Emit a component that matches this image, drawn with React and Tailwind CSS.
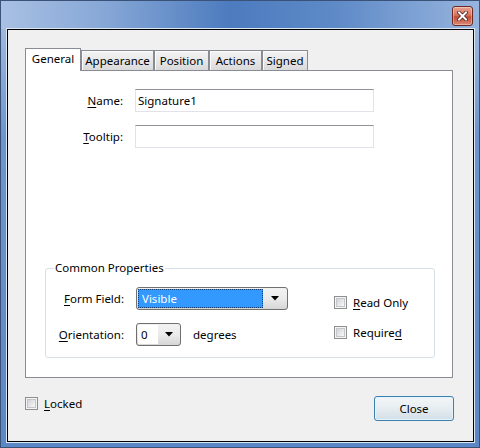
const Ul = ({ children }) => <span className="underline underline-offset-[2px]">{children}</span>;

const CheckBox = ({ children, className }) => (
  <div className={"flex items-center h-[13px] " + (className || "")}>
    <span className="w-[13px] h-[13px] border border-[#8e8f8f] bg-[#f4f4f4] p-[1px] shrink-0">
      <span className="block w-full h-full border border-[#c4c6c9] bg-gradient-to-br from-[#d2d4d7] to-[#f8f8f8]" />
    </span>
    <span className="ml-[6px] leading-none">{children}</span>
  </div>
);

const Arrow = () => (
  <svg width="8" height="5" viewBox="0 0 8 5">
    <polygon points="0,0 8,0 4,4.5" fill="#000" />
  </svg>
);

const tabs = [
  { name: "Appearance", w: "w-[73px]" },
  { name: "Position", w: "w-[55px]" },
  { name: "Actions", w: "w-[53px]" },
  { name: "Signed", w: "w-[46px]" },
];

export default function App() {
  return (
    <div className="w-[480px] h-[448px] flex flex-col border border-[#3a5278] bg-[linear-gradient(180deg,#a9c1e3_0%,#6e96cd_30%,#5b87c6_100%)] font-['Noto_Sans','Open_Sans',sans-serif] text-[11.5px] text-black">
      {/* title bar */}
      <div className="h-[28px] shrink-0 flex justify-end items-start pt-[5px] pr-[6px] bg-[linear-gradient(90deg,#a8c0e3_0%,#86a7d6_22%,#4c7bbe_48%,#5e8ac7_70%,#97b4de_100%)]">
        <div className="w-[21px] h-[20px] rounded-[3px] border border-[#6b2a22] bg-[linear-gradient(180deg,#e8a493_0%,#d8735e_45%,#c24b36_55%,#d98a74_100%)] flex items-center justify-center shadow-[inset_0_0_0_1px_rgba(255,255,255,0.35)]">
          <svg width="11" height="10" viewBox="0 0 11 10">
            <path d="M2 1.5 L9 8.5 M9 1.5 L2 8.5" stroke="#4a1d18" strokeWidth="3.6" strokeLinecap="square" />
            <path d="M2 1.5 L9 8.5 M9 1.5 L2 8.5" stroke="#fff" strokeWidth="2" strokeLinecap="square" />
          </svg>
        </div>
      </div>

      {/* client area */}
      <div className="flex-1 ml-[6px] mr-[5px] mb-[5px] border border-black bg-[#f0f0f0] shadow-[0_0_0_1px_#dce7f4] pl-[17px] pt-[18px] flex flex-col">
        {/* tabs */}
        <div className="flex items-end -mb-px relative z-10">
          <div className="w-[56px] h-[23px] bg-white border border-b-0 border-[#898c95] flex items-center justify-center pb-[3px]">
            General
          </div>
          {tabs.map((t) => (
            <div
              key={t.name}
              className={t.w + " h-[20px] mb-px border border-b-0 border-[#898c95] bg-gradient-to-b from-[#f3f3f3] via-[#e8e8e8] to-[#d9d9d9] shadow-[inset_1px_1px_0_#fbfbfb] flex items-center justify-center"}
            >
              {t.name}
            </div>
          ))}
        </div>

        {/* tab panel */}
        <div className="w-[428px] h-[308px] bg-white border border-[#898c95] flex flex-col">
          <div className="flex items-center mt-[18px]">
            <span className="w-[97px] text-right">
              <Ul>N</Ul>ame:
            </span>
            <div className="ml-[12px] w-[239px] h-[23px] border border-[#e2e3ea] border-t-[#8f9197] flex items-center pl-[2px]">
              Signature1
            </div>
          </div>
          <div className="flex items-center mt-[13px]">
            <span className="w-[97px] text-right">
              <Ul>T</Ul>ooltip:
            </span>
            <div className="ml-[12px] w-[239px] h-[23px] border border-[#e2e3ea] border-t-[#8f9197]" />
          </div>

          <div className="flex-1" />

          {/* group box */}
          <div className="relative ml-[19px] mb-[19px] w-[390px] h-[90px] border border-[#d5dfe5] rounded-[3px] flex">
            <span className="absolute -top-[9px] left-[8px] px-[1px] bg-white leading-[16px]">Common Properties</span>

            <div className="flex flex-col pt-[18px]">
              <div className="flex items-center">
                <span className="w-[78px] text-right">
                  <Ul>F</Ul>orm Field:
                </span>
                <div className="ml-[12px] w-[152px] h-[23px] rounded-[3px] border border-[#707070] bg-gradient-to-b from-[#f2f2f2] via-[#ebebeb] to-[#d6d6d6] flex items-stretch p-[1px]">
                  <div className="flex-1 bg-[#3399ff] border border-dotted border-[#0f3d73] text-white flex items-center pl-[3px]">
                    Visible
                  </div>
                  <div className="w-[23px] flex items-center justify-center">
                    <Arrow />
                  </div>
                </div>
              </div>
              <div className="flex items-center mt-[13px]">
                <span className="w-[78px] text-right">
                  <Ul>O</Ul>rientation:
                </span>
                <div className="ml-[12px] w-[45px] h-[23px] rounded-[3px] border border-[#707070] bg-gradient-to-b from-[#f2f2f2] via-[#ebebeb] to-[#d6d6d6] flex items-stretch p-[1px]">
                  <div className="w-[20px] bg-white flex items-center pl-[3px]">0</div>
                  <div className="flex-1 flex items-center justify-center">
                    <Arrow />
                  </div>
                </div>
                <span className="ml-[12px]">degrees</span>
              </div>
            </div>

            <div className="flex flex-col pt-[27px] ml-[46px]">
              <CheckBox>
                <Ul>R</Ul>ead Only
              </CheckBox>
              <CheckBox className="mt-[17px]">
                Require<Ul>d</Ul>
              </CheckBox>
            </div>
          </div>
        </div>

        {/* bottom row */}
        <div className="w-[429px] flex justify-between items-start mt-[18px]">
          <CheckBox className="mt-[1px]">
            <Ul>L</Ul>ocked
          </CheckBox>
          <button className="w-[80px] h-[25px] rounded-[3px] border border-[#3c7fb1] bg-gradient-to-b from-[#f3f6f8] via-[#e6edf1] to-[#d2dee6] shadow-[inset_0_0_0_1px_#e8f4fb] flex items-center justify-center">
            Close
          </button>
        </div>
      </div>
    </div>
  );
}
